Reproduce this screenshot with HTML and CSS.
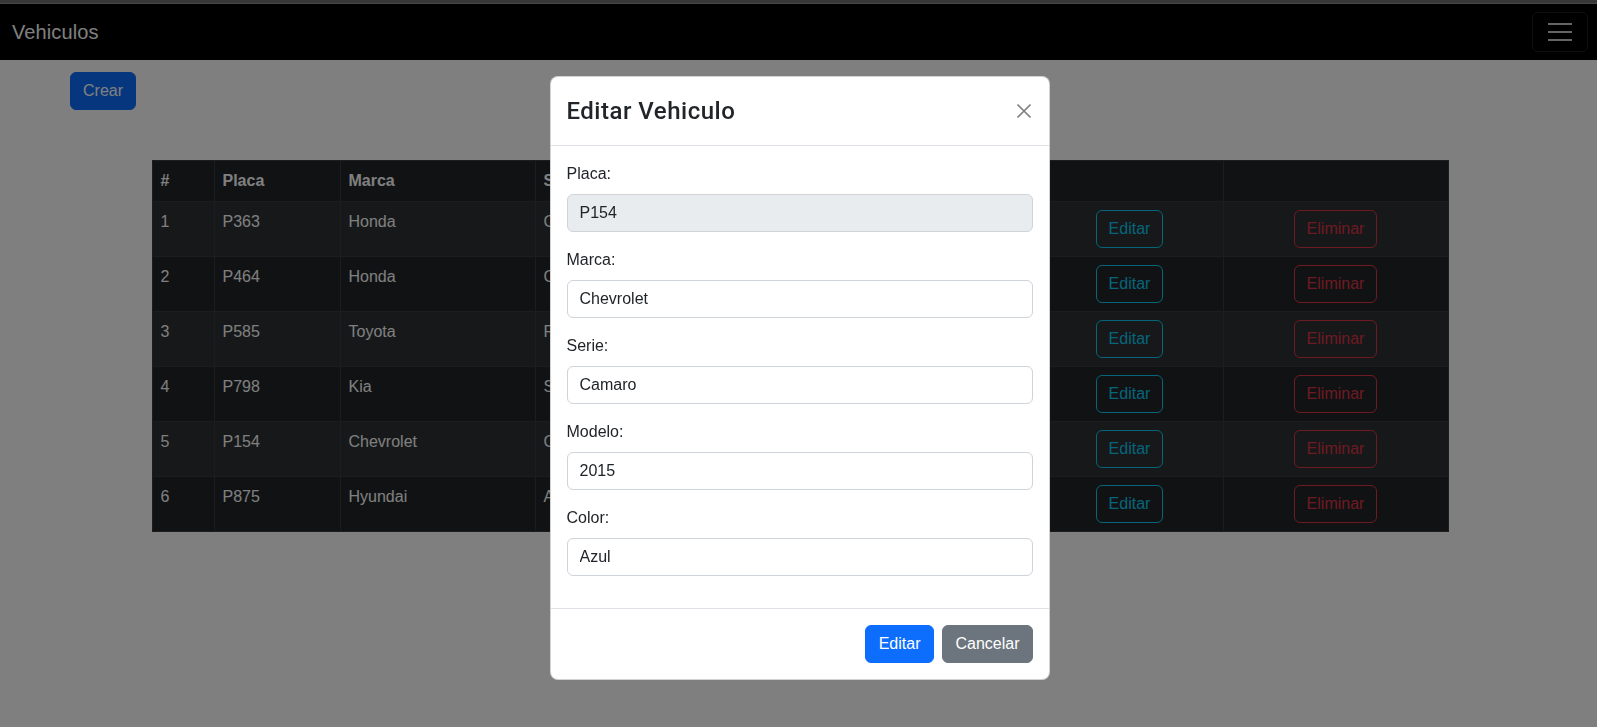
FILE: index.html
```html
<!DOCTYPE html>
<html lang="es">
<head>
<meta charset="utf-8">
<title>Vehiculos</title>
<link rel="stylesheet" href="styles.css">
</head>
<body>
<div class="topstrip"></div>
<nav class="navbar">
  <a class="brand" href="#">Vehiculos</a>
  <button class="toggler" type="button" aria-label="Menu">
    <svg width="24" height="18" viewBox="0 0 24 18"><path d="M0 1h24M0 9h24M0 17h24" stroke="#c8c8c8" stroke-width="2"/></svg>
  </button>
</nav>
<main class="page">
  <div class="actions"><button class="btn btn-primary">Crear</button></div>
  <div class="container">
    <table class="tbl">
      <colgroup>
        <col class="c-num"><col class="c-placa"><col class="c-marca"><col class="c-mid"><col class="c-mid"><col class="c-mid"><col class="c-edit"><col class="c-del">
      </colgroup>
      <thead>
        <tr><th>#</th><th>Placa</th><th>Marca</th><th>Serie</th><th>Modelo</th><th>Color</th><th></th><th></th></tr>
      </thead>
      <tbody>
        <tr><td>1</td><td>P363</td><td>Honda</td><td>Civic</td><td>2018</td><td>Rojo</td><td class="ctr"><button class="btn btn-out-info">Editar</button></td><td class="ctr"><button class="btn btn-out-danger">Eliminar</button></td></tr>
        <tr><td>2</td><td>P464</td><td>Honda</td><td>CR-V</td><td>2020</td><td>Negro</td><td class="ctr"><button class="btn btn-out-info">Editar</button></td><td class="ctr"><button class="btn btn-out-danger">Eliminar</button></td></tr>
        <tr><td>3</td><td>P585</td><td>Toyota</td><td>RAV4</td><td>2019</td><td>Blanco</td><td class="ctr"><button class="btn btn-out-info">Editar</button></td><td class="ctr"><button class="btn btn-out-danger">Eliminar</button></td></tr>
        <tr><td>4</td><td>P798</td><td>Kia</td><td>Sportage</td><td>2021</td><td>Gris</td><td class="ctr"><button class="btn btn-out-info">Editar</button></td><td class="ctr"><button class="btn btn-out-danger">Eliminar</button></td></tr>
        <tr><td>5</td><td>P154</td><td>Chevrolet</td><td>Camaro</td><td>2015</td><td>Azul</td><td class="ctr"><button class="btn btn-out-info">Editar</button></td><td class="ctr"><button class="btn btn-out-danger">Eliminar</button></td></tr>
        <tr><td>6</td><td>P875</td><td>Hyundai</td><td>Accent</td><td>2017</td><td>Verde</td><td class="ctr"><button class="btn btn-out-info">Editar</button></td><td class="ctr"><button class="btn btn-out-danger">Eliminar</button></td></tr>
      </tbody>
    </table>
  </div>
</main>

<div class="backdrop"></div>
<div class="modal">
  <div class="modal-dialog">
    <div class="modal-header">
      <h4 class="modal-title">Editar Vehiculo</h4>
      <button class="btn-close" type="button" aria-label="Close">
        <svg width="16" height="16" viewBox="0 0 16 16"><path d="M1.5 1.5L14.5 14.5M14.5 1.5L1.5 14.5" stroke="#000" stroke-opacity="0.5" stroke-width="1.7"/></svg>
      </button>
    </div>
    <div class="modal-body">
      <div class="group"><label class="lbl">Placa:</label><input class="field" type="text" value="P154" disabled></div>
      <div class="group"><label class="lbl">Marca:</label><input class="field" type="text" value="Chevrolet"></div>
      <div class="group"><label class="lbl">Serie:</label><input class="field" type="text" value="Camaro"></div>
      <div class="group"><label class="lbl">Modelo:</label><input class="field" type="text" value="2015"></div>
      <div class="group"><label class="lbl">Color:</label><input class="field" type="text" value="Azul"></div>
    </div>
    <div class="modal-footer">
      <button class="btn btn-primary btn-edit">Editar</button>
      <button class="btn btn-secondary">Cancelar</button>
    </div>
  </div>
</div>
</body>
</html>
```
FILE: styles.css
```css
* { box-sizing: border-box; }
html, body { margin: 0; padding: 0; }
body {
  font-family: "Liberation Sans", Arial, sans-serif;
  font-size: 16px;
  line-height: 24px;
  color: #212529;
  background: #fff;
  height: 727px;
  overflow: hidden;
}
.topstrip {
  height: 4px;
  background: #6e6e6e;
  border-bottom: 1px solid #909090;
}
.navbar {
  height: 56px;
  background: #000;
  display: flex;
  align-items: center;
  justify-content: space-between;
  padding: 0 9px 0 12px;
}
.brand {
  color: #fff;
  font-size: 20px;
  line-height: 30px;
  letter-spacing: 0.1px;
  text-decoration: none;
}
.toggler {
  width: 56px;
  height: 40px;
  border: 1px solid rgba(255,255,255,.12);
  border-radius: 6px;
  background: transparent;
  display: flex;
  align-items: center;
  justify-content: center;
  padding: 0;
}
.toggler svg { display: block; }
.page { padding-top: 12px; }
.actions { padding-left: 70px; }
.container {
  width: 1296px;
  margin: 50px auto 0;
  position: relative;
  left: 1px;
}
.btn {
  font-family: inherit;
  font-size: 16px;
  line-height: 24px;
  padding: 6px 12px;
  border: 1px solid transparent;
  border-radius: 6px;
  cursor: pointer;
  background: transparent;
}
.btn-primary { background: #0d6efd; border-color: #0d6efd; color: #fff; }
.btn-secondary { background: #6c757d; border-color: #6c757d; color: #fff; }
.btn-out-info { color: #0dcaf0; border-color: #0dcaf0; }
.btn-out-danger { color: #dc3545; border-color: #dc3545; }

.tbl {
  width: 1296px;
  border-collapse: collapse;
  table-layout: fixed;
  background: #212529;
  color: #fff;
}
.c-num { width: 62px; }
.c-placa { width: 126px; }
.c-marca { width: 195px; }
.c-mid { width: 167px; }
.c-edit { width: 187px; }
.c-del { width: 225px; }
.tbl th, .tbl td {
  border: 1px solid #373b3e;
  padding: 8px;
  text-align: left;
  vertical-align: top;
  white-space: nowrap;
  overflow: hidden;
}
.tbl th { font-weight: bold; }
.tbl tbody tr:nth-child(odd) td { background: #2c3034; }
.tbl td.ctr { text-align: center; }

.backdrop {
  position: fixed;
  inset: 0;
  background: rgba(0,0,0,.5);
}
.modal {
  position: fixed;
  inset: 0;
}
.modal-dialog {
  width: 500px;
  margin: 76px auto 0;
  position: relative;
  left: 1px;
  background: #fff;
  border: 1px solid rgba(0,0,0,.175);
  border-radius: 8px;
}
.modal-header {
  display: flex;
  align-items: center;
  justify-content: space-between;
  padding: 16px;
  border-bottom: 1px solid #dee2e6;
}
.modal-title {
  margin: 0;
  font-family: "Roboto", "Liberation Sans", sans-serif;
  font-size: 24px;
  font-weight: 500;
  line-height: 36px;
  letter-spacing: 0.5px;
  color: #212529;
}
.btn-close {
  width: 17px;
  height: 17px;
  padding: 0;
  border: 0;
  background: transparent;
  display: flex;
  align-items: center;
  justify-content: center;
}
.btn-close svg { display: block; }
.modal-body { padding: 16px; }
.group { margin-bottom: 16px; }
.lbl { display: block; margin-bottom: 8px; }
.field {
  display: block;
  width: 100%;
  height: 38px;
  padding: 6px 12px;
  font-family: inherit;
  font-size: 16px;
  line-height: 24px;
  color: #212529;
  background: #fff;
  border: 1px solid #ced4da;
  border-radius: 6px;
}
.field:disabled { background: #e9ecef; color: #212529; opacity: 1; }
.modal-footer {
  display: flex;
  justify-content: flex-end;
  align-items: center;
  gap: 8px;
  padding: 16px 16px;
  border-top: 1px solid #dee2e6;
}
.btn-edit { padding: 6px 13px; }
```
